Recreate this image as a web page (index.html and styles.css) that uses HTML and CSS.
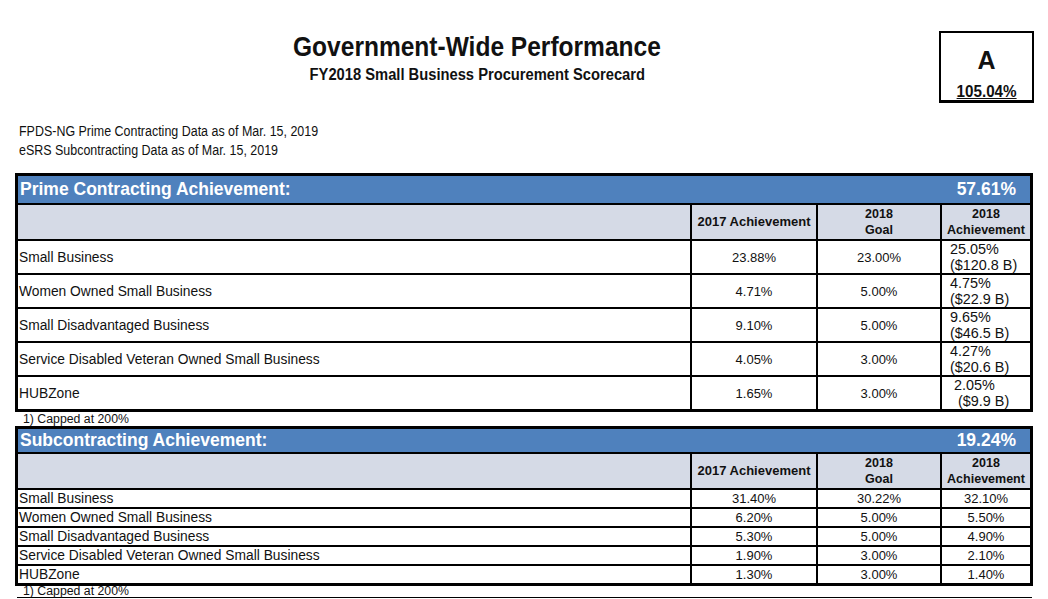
FILE: index.html
```html
<!DOCTYPE html>
<html>
<head>
<meta charset="utf-8">
<link rel="stylesheet" href="styles.css">
</head>
<body>
<div class="page">
  <header class="top">
    <div class="titles">
      <h1 class="title"><span class="narrow">Government-Wide Performance</span></h1>
      <h2 class="subtitle"><span class="narrow">FY2018 Small Business Procurement Scorecard</span></h2>
    </div>
    <div class="grade">
      <div class="grade-letter">A</div>
      <div class="grade-pct"><span class="narrow">105.04%</span></div>
    </div>
  </header>

  <div class="sources">
    <div><span class="narrow-left">FPDS-NG Prime Contracting Data as of Mar. 15, 2019</span></div>
    <div><span class="narrow-left">eSRS Subcontracting Data as of Mar. 15, 2019</span></div>
  </div>

  <section class="card prime">
    <div class="bar"><span>Prime Contracting Achievement:</span><span>57.61%</span></div>
    <div class="hd"></div>
    <div class="hd hd-wide">2017 Achievement</div>
    <div class="hd">2018<br>Goal</div>
    <div class="hd">2018<br>Achievement</div>

    <div class="lbl">Small Business</div>
    <div class="val">23.88%</div>
    <div class="val">23.00%</div>
    <div class="ach">25.05%<br>($120.8 B)</div>

    <div class="lbl">Women Owned Small Business</div>
    <div class="val">4.71%</div>
    <div class="val">5.00%</div>
    <div class="ach">4.75%<br>($22.9 B)</div>

    <div class="lbl">Small Disadvantaged Business</div>
    <div class="val">9.10%</div>
    <div class="val">5.00%</div>
    <div class="ach">9.65%<br>($46.5 B)</div>

    <div class="lbl">Service Disabled Veteran Owned Small Business</div>
    <div class="val">4.05%</div>
    <div class="val">3.00%</div>
    <div class="ach">4.27%<br>($20.6 B)</div>

    <div class="lbl">HUBZone</div>
    <div class="val">1.65%</div>
    <div class="val">3.00%</div>
    <div class="ach">&nbsp;2.05%<br>&nbsp;&nbsp;($9.9 B)</div>
  </section>
  <div class="note">1) Capped at 200%</div>

  <section class="card sub">
    <div class="bar"><span>Subcontracting Achievement:</span><span>19.24%</span></div>
    <div class="hd"></div>
    <div class="hd hd-wide">2017 Achievement</div>
    <div class="hd">2018<br>Goal</div>
    <div class="hd">2018<br>Achievement</div>

    <div class="lbl">Small Business</div>
    <div class="val">31.40%</div>
    <div class="val">30.22%</div>
    <div class="val">32.10%</div>

    <div class="lbl">Women Owned Small Business</div>
    <div class="val">6.20%</div>
    <div class="val">5.00%</div>
    <div class="val">5.50%</div>

    <div class="lbl">Small Disadvantaged Business</div>
    <div class="val">5.30%</div>
    <div class="val">5.00%</div>
    <div class="val">4.90%</div>

    <div class="lbl">Service Disabled Veteran Owned Small Business</div>
    <div class="val">1.90%</div>
    <div class="val">3.00%</div>
    <div class="val">2.10%</div>

    <div class="lbl">HUBZone</div>
    <div class="val">1.30%</div>
    <div class="val">3.00%</div>
    <div class="val">1.40%</div>
  </section>
  <div class="note note-last">1) Capped at 200%</div>
</div>
</body>
</html>
```

FILE: styles.css
```css
* { box-sizing: border-box; }

body {
  margin: 0;
  background: #fff;
  color: #111;
  font-family: "Liberation Sans", Arial, sans-serif;
}

.page {
  padding: 31px 15px 0 15px;
}

.top {
  display: flex;
  align-items: flex-start;
}

.titles {
  flex: 1;
  text-align: center;
}

.narrow {
  display: inline-block;
  transform: scaleX(0.876);
}

.narrow-left {
  display: inline-block;
  transform: scaleX(0.89);
  transform-origin: left center;
}

.title {
  margin: 0;
  font-weight: bold;
  font-size: 28px;
  line-height: 32px;
}

.subtitle {
  margin: 2px 0 0;
  font-weight: bold;
  font-size: 16px;
  line-height: 20px;
}

.subtitle .narrow { transform: scaleX(0.92); }

.grade {
  width: 95px;
  height: 72px;
  border: 2px solid #000;
  border-bottom-width: 3px;
  margin-right: -1px;
  display: flex;
  flex-direction: column;
  align-items: center;
}

.grade-letter {
  font-weight: bold;
  font-size: 25px;
  line-height: 28px;
  margin-top: 13px;
}

.grade-pct {
  font-weight: bold;
  font-size: 16px;
  line-height: 16px;
  margin-top: 10px;
}

.grade-pct .narrow {
  transform: scaleX(0.95);
  text-decoration: underline;
}

.sources {
  margin-top: 19px;
  padding-left: 4px;
  font-size: 14px;
  line-height: 19px;
}

.card {
  display: grid;
  grid-template-columns: 672px 124px 122px 88px;
  gap: 2px;
  background: #000;
  border: 3px solid #000;
}

.prime { margin-top: 13px; }

.bar {
  grid-column: 1 / -1;
  background: #4f81bd;
  color: #fff;
  font-weight: bold;
  font-size: 17.5px;
  display: flex;
  justify-content: space-between;
  align-items: center;
  padding: 0 14px 0 2px;
  height: 27px;
}

.sub .bar { height: 23px; }

.hd {
  background: #d5dae6;
  height: 34px;
  font-weight: bold;
  font-size: 12.5px;
  line-height: 16px;
  display: flex;
  align-items: center;
  justify-content: center;
  text-align: center;
}

.hd-wide { font-size: 13px; }

.lbl, .val, .ach {
  background: #fff;
  font-size: 13px;
  display: flex;
  align-items: center;
}

.lbl {
  padding-left: 1px;
  font-size: 13.8px;
}
.val { justify-content: center; }
.ach {
  padding-left: 8px;
  font-size: 14.4px;
  line-height: 16px;
}

.prime .lbl, .prime .val, .prime .ach { height: 32px; }
.sub .lbl, .sub .val { height: 17px; line-height: 17px; }

.note {
  font-size: 12.3px;
  line-height: 14px;
  padding-left: 8px;
}

.note-last {
  margin-left: 2px;
  margin-right: 1px;
  padding-left: 6px;
  line-height: 11px;
  border-bottom: 1px solid #000;
}
```
